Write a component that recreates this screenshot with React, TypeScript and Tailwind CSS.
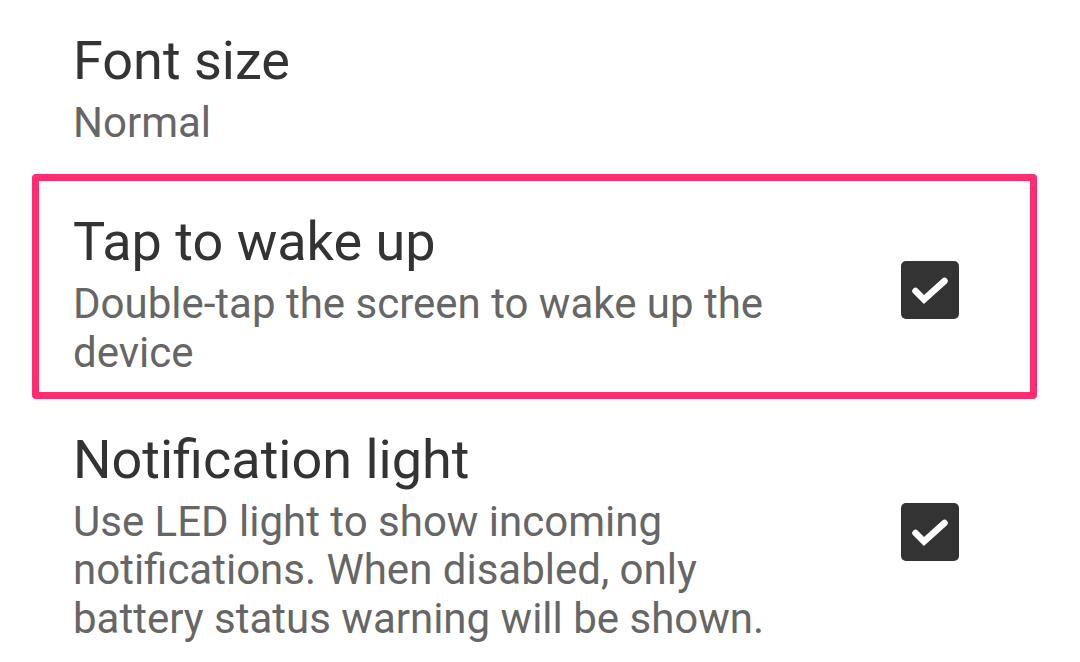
const font = { fontFamily: 'Roboto, "Noto Sans", sans-serif' };

function Check() {
  return (
    <div className="mb-[7px] flex h-[58px] w-[58px] shrink-0 items-center justify-center rounded-[5px] bg-[#333333]">
      <svg width="58" height="58" viewBox="0 0 58 58">
        <path d="M14.5 30 L23 38.5 L43.5 20" fill="none" stroke="#fff" strokeWidth="6.5" strokeLinecap="round" strokeLinejoin="miter" />
      </svg>
    </div>
  );
}

interface RowProps {
  title: string;
  summary: string;
  checked?: boolean;
  highlight?: boolean;
  className: string;
}

function Row({ title, summary, checked, highlight, className }: RowProps) {
  return (
    <div
      className={`ml-[32px] flex w-[1005px] items-center border-[7px] pl-[34px] pr-[71px] ${
        highlight ? 'rounded-[4px] border-[#ff2d6f]' : 'border-transparent'
      } ${className}`}
    >
      <div className="w-[727px]">
        <div className="text-[54px] leading-[64px] text-[#333333]">{title}</div>
        <div className="mt-[6px] text-[42px] leading-[48.5px] text-[#666666]">{summary}</div>
      </div>
      <div className="flex-1" />
      {checked && <Check />}
    </div>
  );
}

export default function App() {
  return (
    <div className="h-[662px] w-[1080px] overflow-hidden bg-white" style={font}>
      <Row title="Font size" summary="Normal" className="pt-[21.5px] pb-[19.5px]" />
      <Row
        title="Tap to wake up"
        summary="Double-tap the screen to wake up the device"
        checked
        highlight
        className="pt-[29.5px] pb-[15px]"
      />
      <Row
        title="Notification light"
        summary="Use LED light to show incoming notifications. When disabled, only battery status warning will be shown."
        checked
        className="pt-[21.5px] pb-[10px]"
      />
    </div>
  );
}
